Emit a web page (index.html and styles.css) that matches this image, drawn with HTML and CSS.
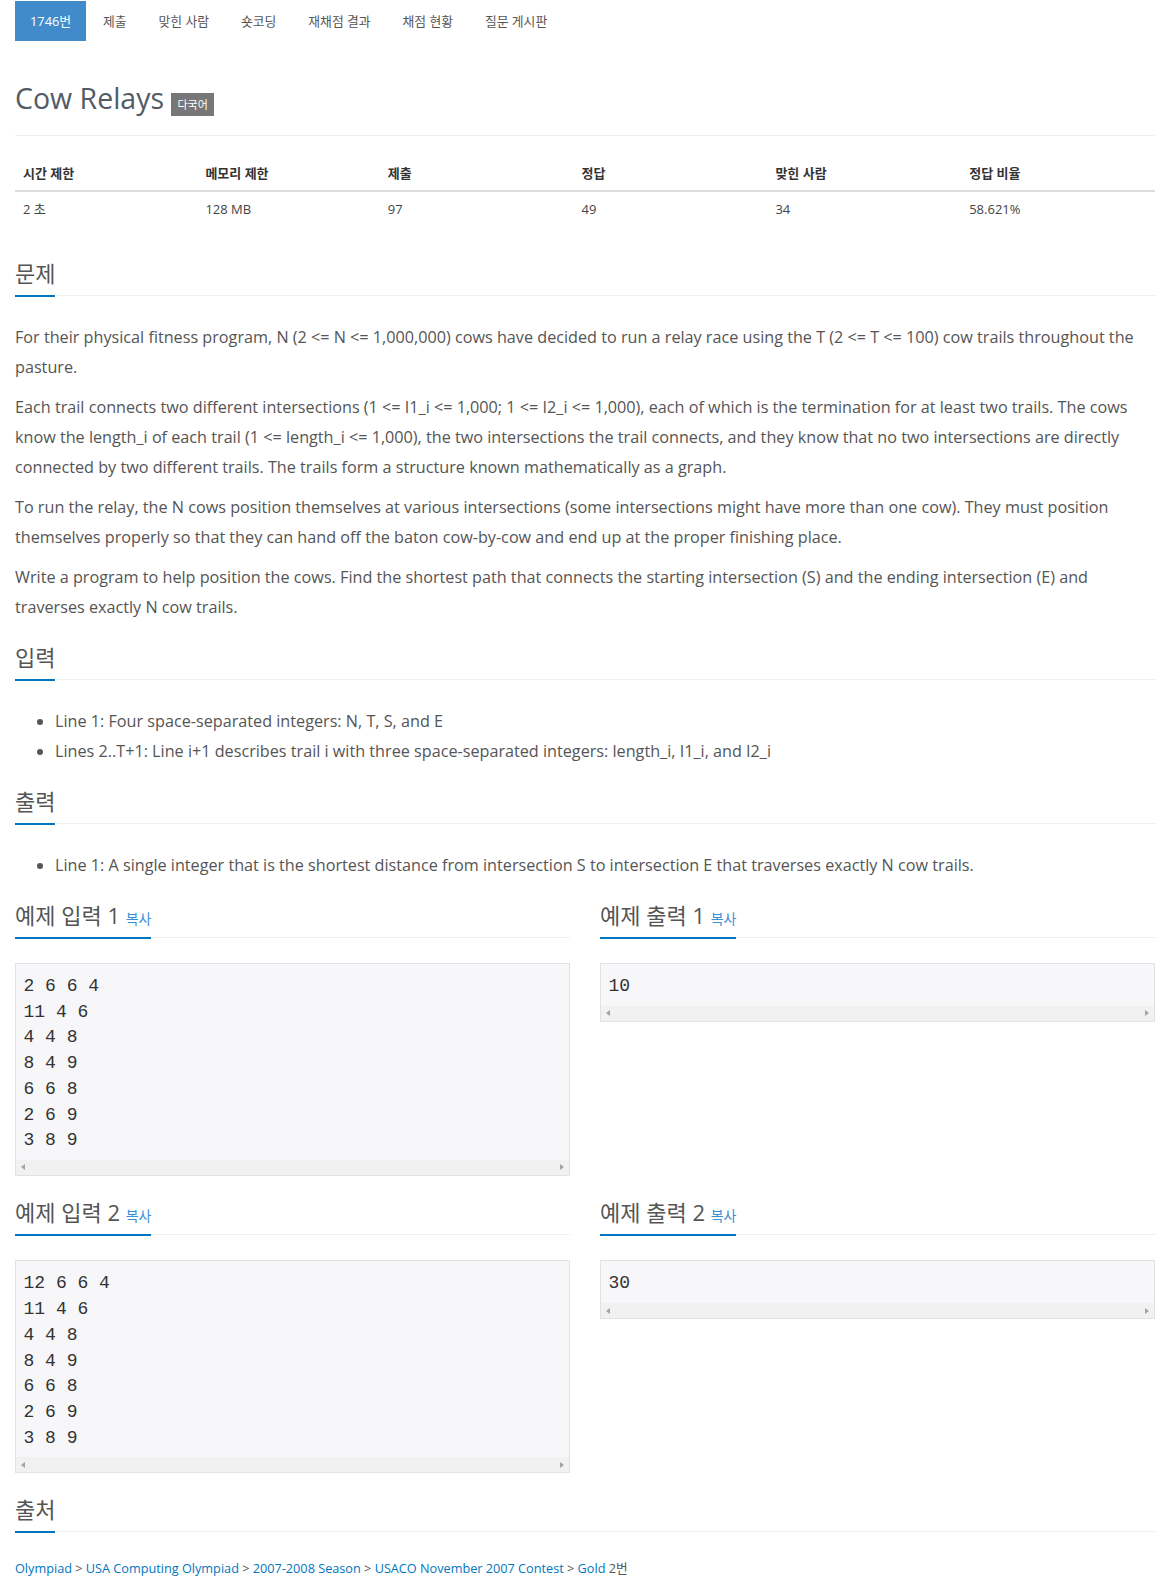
FILE: index.html
```html
<!DOCTYPE html>
<html lang="ko">
<head>
<meta charset="utf-8">
<title>Cow Relays</title>
<link rel="stylesheet" href="styles.css">
</head>
<body>
<div class="container">
  <ul class="tabs">
    <li class="active"><a>1746번</a></li>
    <li><a>제출</a></li>
    <li><a>맞힌 사람</a></li>
    <li><a>숏코딩</a></li>
    <li><a>재채점 결과</a></li>
    <li><a>채점 현황</a></li>
    <li><a>질문 게시판</a></li>
  </ul>

  <h1 class="title">Cow Relays <span class="label">다국어</span></h1>
  <hr class="rule">

  <table class="info">
    <thead>
      <tr>
        <th class="w16">시간 제한</th>
        <th class="w16">메모리 제한</th>
        <th class="w17">제출</th>
        <th class="w17">정답</th>
        <th class="w17">맞힌 사람</th>
        <th class="w17">정답 비율</th>
      </tr>
    </thead>
    <tbody>
      <tr>
        <td>2 초</td>
        <td>128 MB</td>
        <td>97</td>
        <td>49</td>
        <td>34</td>
        <td>58.621%</td>
      </tr>
    </tbody>
  </table>

  <section class="section">
    <div class="headline"><h2>문제</h2></div>
    <div class="text">
      <p>For their physical fitness program, N (2 &lt;= N &lt;= 1,000,000) cows have decided to run a relay race using the T (2 &lt;= T &lt;= 100) cow trails throughout the pasture.</p>
      <p>Each trail connects two different intersections (1 &lt;= I1_i &lt;= 1,000; 1 &lt;= I2_i &lt;= 1,000), each of which is the termination for at least two trails. The cows know the length_i of each trail (1 &lt;= length_i &lt;= 1,000), the two intersections the trail connects, and they know that no two intersections are directly connected by two different trails. The trails form a structure known mathematically as a graph.</p>
      <p>To run the relay, the N cows position themselves at various intersections (some intersections might have more than one cow). They must position themselves properly so that they can hand off the baton cow-by-cow and end up at the proper finishing place.</p>
      <p>Write a program to help position the cows. Find the shortest path that connects the starting intersection (S) and the ending intersection (E) and traverses exactly N cow trails.</p>
    </div>
  </section>

  <section class="section">
    <div class="headline"><h2>입력</h2></div>
    <div class="text">
      <ul>
        <li>Line 1: Four space-separated integers: N, T, S, and E</li>
        <li>Lines 2..T+1: Line i+1 describes trail i with three space-separated integers: length_i, I1_i, and I2_i</li>
      </ul>
    </div>
  </section>

  <section class="section">
    <div class="headline"><h2>출력</h2></div>
    <div class="text">
      <ul>
        <li>Line 1: A single integer that is the shortest distance from intersection S to intersection E that traverses exactly N cow trails.</li>
      </ul>
    </div>
  </section>

  <div class="samples">
    <section class="section">
      <div class="headline"><h2>예제 입력 1 <a class="copy">복사</a></h2></div>
      <div class="sample">
        <pre>2 6 6 4
11 4 6
4 4 8
8 4 9
6 6 8
2 6 9
3 8 9</pre>
        <div class="hscroll"><span class="arr-l"></span><span class="arr-r"></span></div>
      </div>
    </section>
    <section class="section">
      <div class="headline"><h2>예제 출력 1 <a class="copy">복사</a></h2></div>
      <div class="sample">
        <pre>10</pre>
        <div class="hscroll"><span class="arr-l"></span><span class="arr-r"></span></div>
      </div>
    </section>
    <section class="section">
      <div class="headline"><h2>예제 입력 2 <a class="copy">복사</a></h2></div>
      <div class="sample">
        <pre>12 6 6 4
11 4 6
4 4 8
8 4 9
6 6 8
2 6 9
3 8 9</pre>
        <div class="hscroll"><span class="arr-l"></span><span class="arr-r"></span></div>
      </div>
    </section>
    <section class="section">
      <div class="headline"><h2>예제 출력 2 <a class="copy">복사</a></h2></div>
      <div class="sample">
        <pre>30</pre>
        <div class="hscroll"><span class="arr-l"></span><span class="arr-r"></span></div>
      </div>
    </section>
  </div>

  <section class="section">
    <div class="headline"><h2>출처</h2></div>
    <div class="source">
      <a>Olympiad</a> &gt; <a>USA Computing Olympiad</a> &gt; <a>2007-2008 Season</a> &gt; <a>USACO November 2007 Contest</a> &gt; <a>Gold</a> 2번
    </div>
  </section>
</div>
</body>
</html>
```

FILE: styles.css
```css
* { box-sizing: border-box; }

html, body {
  margin: 0;
  padding: 0;
  background: #fff;
}

body {
  font-family: "Open Sans", "Noto Sans CJK KR", sans-serif;
  font-size: 13px;
  color: #555;
}

.container {
  width: 1170px;
  padding: 0 15px;
}

/* tabs */
.tabs {
  list-style: none;
  margin: 1px 0 0;
  padding: 0;
  display: flex;
  gap: 2px;
  font-size: 12.8px;
}

.tabs a {
  display: block;
  padding: 10px 15px;
  line-height: 20px;
  color: #555;
}

.tabs .active a {
  background: #428bca;
  color: #fff;
}

/* title */
.title {
  margin: 41px 0 0;
  font-size: 28.5px;
  line-height: 33px;
  font-weight: 400;
  color: #525b64;
}

.label {
  display: inline-block;
  background: #777;
  color: #fff;
  font-size: 11px;
  line-height: 1;
  padding: 6px 6px 5.5px;
  font-weight: 400;
}

.rule {
  border: 0;
  border-top: 1px solid #eee;
  margin: 19px 0 20px;
  height: 0;
}

/* info table */
.info {
  width: 100%;
  border-collapse: collapse;
  margin-bottom: 36px;
}

.info th,
.info td {
  padding: 8px;
  line-height: 18.5px;
  text-align: left;
}

.info th {
  font-weight: 700;
  color: #333;
  border-bottom: 2px solid #ddd;
}

.info td {
  color: #444;
}

.w16 { width: 16%; }
.w17 { width: 17%; }

/* sections */
.section {
  margin-bottom: 17px;
}

.headline {
  border-bottom: 1px dotted #dfe3e8;
  margin-bottom: 26px;
}

.headline h2 {
  display: inline-block;
  margin: 0 0 -2px;
  padding-bottom: 11px;
  border-bottom: 2px solid #0076c0;
  font-size: 22px;
  line-height: 21px;
  font-weight: 400;
  color: #555;
}

.copy {
  font-size: 14px;
  line-height: 1;
  color: #3b8fd4;
}

.text {
  font-size: 16.2px;
  line-height: 30px;
  color: #555;
  margin-bottom: 25px;
}

.text p {
  margin: 0 0 10px;
}

.text ul {
  margin: 0 0 10px;
  padding-left: 40px;
}

.text > :last-child {
  margin-bottom: 0;
}

/* samples */
.samples {
  display: grid;
  grid-template-columns: 1fr 1fr;
  column-gap: 30px;
  margin-top: 2px;
}

.samples .section {
  margin-bottom: 16px;
}

.samples .headline {
  margin-bottom: 25px;
}

.sample {
  border: 1px solid #e1e1e8;
  background: #f7f7f9;
  margin-bottom: 10px;
}

.sample pre {
  margin: 0;
  padding: 10.5px 9.5px 6px 7.5px;
  font-family: "Liberation Mono", "DejaVu Sans Mono", monospace;
  font-size: 18px;
  line-height: 25.7px;
  color: #333;
}

.hscroll {
  height: 15px;
  background: #f1f1f1;
  display: flex;
  align-items: center;
  justify-content: space-between;
  padding: 0 5px;
}

.arr-l {
  width: 0;
  height: 0;
  border-top: 3.5px solid transparent;
  border-bottom: 3.5px solid transparent;
  border-right: 4px solid #a3a3a3;
}

.arr-r {
  width: 0;
  height: 0;
  border-top: 3.5px solid transparent;
  border-bottom: 3.5px solid transparent;
  border-left: 4px solid #a3a3a3;
}

/* source */
.source {
  font-size: 12.7px;
  line-height: 20px;
  color: #555;
}

.source a {
  color: #0076c0;
}
```
